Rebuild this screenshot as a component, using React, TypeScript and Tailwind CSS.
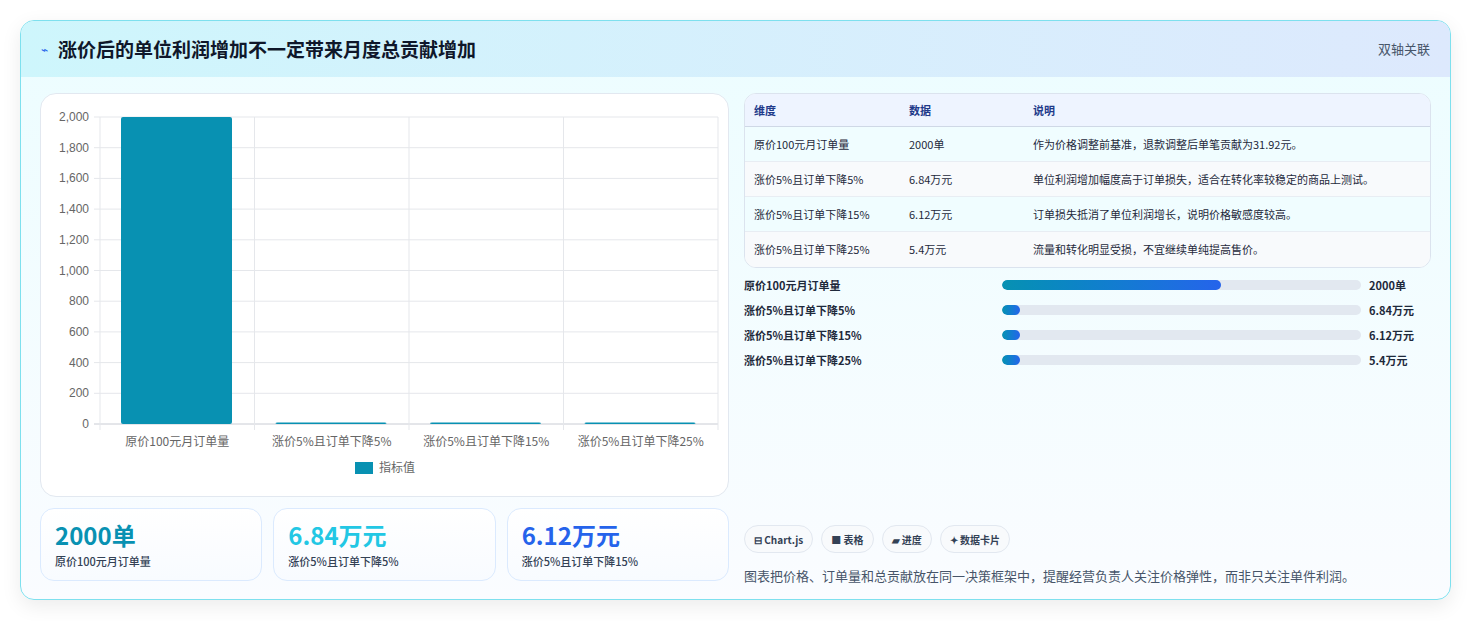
import React from "react";

const font = { fontFamily: '"Noto Sans CJK SC", "Noto Sans", sans-serif' };

const rows = [
  ["原价100元月订单量", "2000单", "作为价格调整前基准，退款调整后单笔贡献为31.92元。"],
  ["涨价5%且订单下降5%", "6.84万元", "单位利润增加幅度高于订单损失，适合在转化率较稳定的商品上测试。"],
  ["涨价5%且订单下降15%", "6.12万元", "订单损失抵消了单位利润增长，说明价格敏感度较高。"],
  ["涨价5%且订单下降25%", "5.4万元", "流量和转化明显受损，不宜继续单纯提高售价。"],
];
const bars = [
  ["原价100元月订单量", 61, "2000单"],
  ["涨价5%且订单下降5%", 5, "6.84万元"],
  ["涨价5%且订单下降15%", 5, "6.12万元"],
  ["涨价5%且订单下降25%", 5, "5.4万元"],
] as const;

function Chart() {
  const x0 = 59, x1 = 677, y0 = 23, y1 = 330;
  const ticks = [0, 200, 400, 600, 800, 1000, 1200, 1400, 1600, 1800, 2000];
  const cw = (x1 - x0) / 4;
  const cats = ["原价100元月订单量", "涨价5%且订单下降5%", "涨价5%且订单下降15%", "涨价5%且订单下降25%"];
  const vals = [2000, 6.84, 6.12, 5.4];
  return (
    <svg width="689" height="404" viewBox="0 0 689 404">
      {ticks.map((t) => {
        const y = y1 - (t / 2000) * (y1 - y0);
        return (
          <g key={t}>
            <line x1={x0 - 6} x2={x1} y1={y} y2={y} stroke={t === 0 ? "#c9ccd4" : "#e5e7eb"} strokeWidth="1" />
            <text x={x0 - 11} y={y + 4} textAnchor="end" fontSize="12" fill="#666" fontFamily="Liberation Sans, Arial, sans-serif">
              {t.toLocaleString("en-US")}
            </text>
          </g>
        );
      })}
      {[0, 1, 2, 3, 4].map((i) => (
        <line key={i} x1={x0 + i * cw} x2={x0 + i * cw} y1={y0} y2={y1 + 6} stroke="#e5e7eb" />
      ))}
      {vals.map((v, i) => {
        const h = Math.max(1.5, (v / 2000) * (y1 - y0));
        const bx = x0 + i * cw + 21;
        return <rect key={i} x={bx} y={y1 - h} width={111} height={h} rx={2} fill="#0891b2" />;
      })}
      {cats.map((c, i) => (
        <text key={c} x={x0 + i * cw + cw / 2} y={352} textAnchor="middle" fontSize="12" fill="#666" style={font}>
          {c}
        </text>
      ))}
      <rect x={314} y={368} width={18} height={12} fill="#0891b2" />
      <text x={338} y={378} fontSize="12" fill="#666" style={font}>指标值</text>
    </svg>
  );
}

export default function App() {
  return (
    <div className="min-h-[621px] bg-white pt-[20px] px-[20px]" style={font}>
      <div className="w-[1431px] h-[580px] rounded-[14px] border border-[#7ee0ee] overflow-hidden shadow-[0_6px_20px_rgba(0,0,0,0.08)] bg-gradient-to-b from-[#ecfdff] to-[#fafcff]">
        <div className="h-[56px] flex items-center justify-between px-[20px] bg-gradient-to-r from-[#cef6fc] to-[#dde9fd]">
          <div className="flex items-center gap-[10px]">
            <span className="text-[#2563eb] text-[12px]">⌁</span>
            <span className="text-[19px] font-bold text-[#0f172a]">涨价后的单位利润增加不一定带来月度总贡献增加</span>
          </div>
          <span className="text-[13px] text-[#475569]">双轴关联</span>
        </div>
        <div className="flex gap-[15px] px-[19px] pt-[16px]">
          <div className="w-[689px] flex flex-col gap-[11px]">
            <div className="h-[404px] rounded-[16px] border border-[#e2e8f0] bg-white overflow-hidden">
              <Chart />
            </div>
            <div className="flex gap-[11px]">
              {[
                ["2000单", "text-[#0891b2]", "原价100元月订单量"],
                ["6.84万元", "text-[#22c7e4]", "涨价5%且订单下降5%"],
                ["6.12万元", "text-[#2563eb]", "涨价5%且订单下降15%"],
              ].map(([v, c, l]) => (
                <div key={l} className="flex-1 h-[73px] rounded-[14px] border border-[#dbeafe] bg-gradient-to-b from-white to-[#f8fbff] px-[14px] pt-[10px]">
                  <div className={`text-[24px] font-bold leading-[32px] ${c}`}>{v}</div>
                  <div className="text-[11px] text-[#334155] font-medium mt-[2px]">{l}</div>
                </div>
              ))}
            </div>
          </div>
          <div className="w-[689px] flex flex-col">
            <div className="rounded-[12px] border border-[#dbe3ee] overflow-hidden bg-white text-[11px]">
              <div className="flex h-[33px] items-center bg-[#eef4ff] border-b border-[#cfd8e6] text-[#1e3a8a] font-semibold">
                <div className="w-[164px] pl-[9px]">维度</div>
                <div className="w-[124px]">数据</div>
                <div className="flex-1">说明</div>
              </div>
              {rows.map((r, i) => (
                <div key={i} className={`flex h-[35px] items-center text-[#1e293b] ${i < 3 ? "border-b border-[#e8edf3]" : ""} ${i % 2 ? "bg-[#f8fafc]" : "bg-[#f0fdff]"}`}>
                  <div className="w-[164px] pl-[9px]">{r[0]}</div>
                  <div className="w-[124px]">{r[1]}</div>
                  <div className="flex-1">{r[2]}</div>
                </div>
              ))}
            </div>
            <div className="mt-[8px] flex flex-col gap-[7px]">
              {bars.map(([l, p, v]) => (
                <div key={l} className="flex items-center h-[18px] text-[11px] font-bold text-[#1e293b]">
                  <div className="w-[258px]">{l}</div>
                  <div className="w-[359px] h-[10px] rounded-full bg-[#e2e8f0] overflow-hidden">
                    <div className="h-full rounded-full bg-gradient-to-r from-[#0891b2] to-[#2563eb]" style={{ width: `${p}%` }} />
                  </div>
                  <div className="ml-[8px]">{v}</div>
                </div>
              ))}
            </div>
            <div className="mt-[156px] flex gap-[8px]">
              {["⊟ Chart.js", "■ 表格", "▰ 进度", "✦ 数据卡片"].map((c) => (
                <span key={c} className="h-[28px] px-[9px] flex items-center rounded-full border border-[#e2e8f0] bg-[#f8fafc] text-[10px] font-semibold text-[#334155]">{c}</span>
              ))}
            </div>
            <div className="mt-[13px] text-[13px] text-[#475569]">图表把价格、订单量和总贡献放在同一决策框架中，提醒经营负责人关注价格弹性，而非只关注单件利润。</div>
          </div>
        </div>
      </div>
    </div>
  );
}
